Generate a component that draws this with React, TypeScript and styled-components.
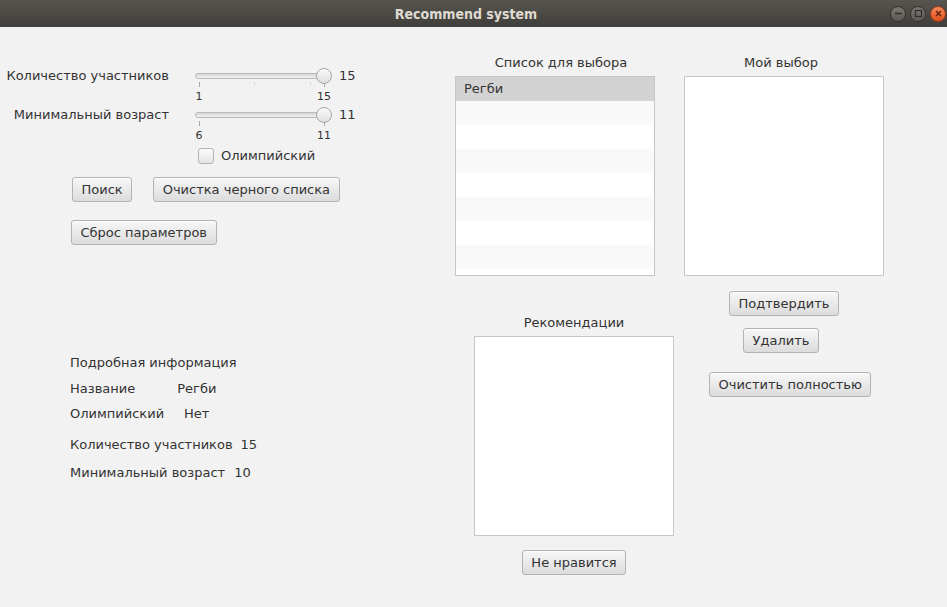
import React from "react";
import styled, { createGlobalStyle } from "styled-components";

const Global = createGlobalStyle`
  html, body { margin: 0; padding: 0; background: #f2f2f2; }
  body { font-family: "DejaVu Sans", "Noto Sans", sans-serif; font-size: 13px; color: #333333; }
  * { box-sizing: border-box; }
`;

const Window = styled.div`
  width: 947px;
  height: 607px;
  display: flex;
  flex-direction: column;
  overflow: hidden;
`;

const TitleBar = styled.div`
  height: 27px;
  flex: none;
  display: flex;
  align-items: center;
  background: linear-gradient(#57554f, #3f3e3a);
`;

const TitleText = styled.div`
  flex: 1;
  text-align: center;
  padding-left: 42px;
  font-family: "DejaVu Sans Condensed", "DejaVu Sans", sans-serif;
  font-weight: bold;
  font-size: 14px;
  color: #dfdbd2;
`;

const Controls = styled.div`
  display: flex;
  gap: 4px;
  margin-right: 1px;
`;

const Ctl = styled.div<{ $close?: boolean }>`
  width: 16px;
  height: 16px;
  border-radius: 50%;
  display: flex;
  align-items: center;
  justify-content: center;
  border: 1px solid ${(p) => (p.$close ? "#9e3a17" : "#34332f")};
  background: ${(p) =>
    p.$close
      ? "linear-gradient(#f58a5c, #e0501c)"
      : "linear-gradient(#7a7872, #5c5a55)"};
`;

const Content = styled.div`
  flex: 1;
  display: flex;
  background: #f2f2f2;
`;

const LeftColumn = styled.div`
  width: 455px;
  flex: none;
  display: flex;
  flex-direction: column;
  padding-top: 41px;
`;

const SliderRow = styled.div`
  display: flex;
  align-items: flex-start;
  height: 39px;
`;

const RowLabel = styled.div`
  width: 169px;
  text-align: right;
  line-height: 16px;
  white-space: nowrap;
`;

const SliderBox = styled.div`
  position: relative;
  width: 136px;
  margin-left: 26px;
  display: flex;
  flex-direction: column;
`;

const Track = styled.div`
  margin-top: 5px;
  height: 6px;
  border-radius: 3px;
  border: 1px solid #b9b9b9;
  background: linear-gradient(#d6d6d6, #f0f0f0);
`;

const Thumb = styled.div`
  position: absolute;
  top: 0;
  width: 16px;
  height: 16px;
  border-radius: 50%;
  border: 1px solid #a6a6a6;
  background: linear-gradient(#fbfbfb, #dedede);
`;

const Ticks = styled.svg`
  display: block;
  margin-top: 3px;
`;

const TickLabels = styled.div`
  display: flex;
  justify-content: space-between;
  margin: 2px -3px 0 -6px;
  font-size: 11px;
  line-height: 13px;
  color: #333;
`;

const TickLabel = styled.span`
  width: 20px;
  text-align: center;
`;

const SliderValue = styled.div`
  margin-left: 8px;
  line-height: 16px;
  font-size: 13px;
`;

const CheckRow = styled.label`
  display: flex;
  align-items: center;
  gap: 7px;
  margin: 2px 0 0 198px;
  line-height: 16px;
`;

const CheckBox = styled.span`
  width: 16px;
  height: 16px;
  border-radius: 3px;
  border: 1px solid #b4b4b4;
  background: linear-gradient(#fafafa, #e4e4e4);
`;

const ButtonRow = styled.div<{ $top: number; $left: number }>`
  display: flex;
  gap: 21px;
  margin-top: ${(p) => p.$top}px;
  margin-left: ${(p) => p.$left}px;
`;

const Button = styled.button<{ $top?: number; $left?: number }>`
  height: 25px;
  padding: 0 8.5px;
  font-family: "DejaVu Sans", sans-serif;
  font-size: 13px;
  color: #333;
  border: 1px solid #b3b3b3;
  border-radius: 3px;
  background: linear-gradient(#f7f7f7, #dcdcdc);
  box-shadow: inset 0 1px 0 rgba(255, 255, 255, 0.7);
  white-space: nowrap;
  align-self: flex-start;
  margin-top: ${(p) => p.$top ?? 0}px;
  margin-left: ${(p) => p.$left ?? 0}px;
`;

const Details = styled.div`
  margin: 110px 0 0 70px;
  display: flex;
  flex-direction: column;
`;

const DetailRow = styled.div<{ $top: number; $gap: number }>`
  display: flex;
  gap: ${(p) => p.$gap}px;
  line-height: 16px;
  margin-top: ${(p) => p.$top}px;
  white-space: nowrap;
`;

const MiddleColumn = styled.div`
  width: 229px;
  flex: none;
  display: flex;
  flex-direction: column;
  padding-top: 28px;
`;

const RightColumn = styled.div`
  width: 200px;
  flex: none;
  display: flex;
  flex-direction: column;
  padding-top: 28px;
`;

const Section = styled.div<{ $left?: number; $top?: number }>`
  width: 200px;
  display: flex;
  flex-direction: column;
  margin-left: ${(p) => p.$left ?? 0}px;
  margin-top: ${(p) => p.$top ?? 0}px;
`;

const SectionTitle = styled.div<{ $shift?: number }>`
  line-height: 16px;
  text-align: center;
  padding-left: ${(p) => Math.max(0, (p.$shift ?? 0) * 2)}px;
  padding-right: ${(p) => Math.max(0, -(p.$shift ?? 0) * 2)}px;
  margin-bottom: 5px;
  white-space: nowrap;
`;

const ListBox = styled.div`
  width: 200px;
  height: 200px;
  border: 1px solid #c6c6c6;
  background: #ffffff;
  overflow: hidden;
`;

const ListRow = styled.div<{ $selected?: boolean; $odd?: boolean }>`
  height: 24px;
  line-height: 24px;
  padding-left: 8px;
  background: ${(p) => (p.$selected ? "#d3d3d3" : p.$odd ? "#f9f9f9" : "#ffffff")};
`;

const CenterButton = styled(Button)`
  align-self: center;
`;

type SliderProps = { min: number; max: number; value: number; minor?: number[] };

const Slider = ({ min, max, value, minor = [] }: SliderProps) => {
  const frac = (value - min) / (max - min);
  return (
    <SliderBox>
      <Track />
      <Thumb style={{ left: 4 + frac * 125 - 8 }} />
      <Ticks width="136" height="6" viewBox="0 0 136 6">
        <line x1="4.5" y1="0" x2="4.5" y2="5" stroke="#a8a8a8" strokeWidth="1" />
        <line x1="129.5" y1="0" x2="129.5" y2="5" stroke="#a8a8a8" strokeWidth="1" />
        {minor.map((m) => (
          <line key={m} x1={m + 0.5} y1="0.5" x2={m + 0.5} y2="2.5" stroke="#c4c4c4" strokeWidth="1" />
        ))}
      </Ticks>
      <TickLabels>
        <TickLabel>{min}</TickLabel>
        <TickLabel>{max}</TickLabel>
      </TickLabels>
    </SliderBox>
  );
};

export default function App() {
  const rows = Array.from({ length: 9 }, (_, i) => i);
  return (
    <>
      <Global />
      <Window>
        <TitleBar>
          <TitleText>Recommend system</TitleText>
          <Controls>
            <Ctl>
              <svg width="9" height="9" viewBox="0 0 9 9">
                <line x1="1" y1="4.5" x2="8" y2="4.5" stroke="#2e2d29" strokeWidth="1.5" />
              </svg>
            </Ctl>
            <Ctl>
              <svg width="9" height="9" viewBox="0 0 9 9">
                <rect x="1.5" y="1.5" width="6" height="6" fill="none" stroke="#2e2d29" strokeWidth="1.2" />
              </svg>
            </Ctl>
            <Ctl $close>
              <svg width="9" height="9" viewBox="0 0 9 9">
                <path d="M2 2 L7 7 M7 2 L2 7" stroke="#5a1d08" strokeWidth="1.3" />
              </svg>
            </Ctl>
          </Controls>
        </TitleBar>
        <Content>
          <LeftColumn>
            <SliderRow>
              <RowLabel>Количество участников</RowLabel>
              <Slider min={1} max={15} value={15} minor={[59, 115]} />
              <SliderValue>15</SliderValue>
            </SliderRow>
            <SliderRow>
              <RowLabel>Минимальный возраст</RowLabel>
              <Slider min={6} max={11} value={11} />
              <SliderValue>11</SliderValue>
            </SliderRow>
            <CheckRow>
              <CheckBox />
              <span>Олимпийский</span>
            </CheckRow>
            <ButtonRow $top={13} $left={72}>
              <Button>Поиск</Button>
              <Button>Очистка черного списка</Button>
            </ButtonRow>
            <ButtonRow $top={18} $left={71}>
              <Button>Сброс параметров</Button>
            </ButtonRow>
            <Details>
              <DetailRow $top={0} $gap={0}>Подробная информация</DetailRow>
              <DetailRow $top={10} $gap={42}>
                <span>Название</span>
                <span>Регби</span>
              </DetailRow>
              <DetailRow $top={9} $gap={20}>
                <span>Олимпийский</span>
                <span>Нет</span>
              </DetailRow>
              <DetailRow $top={15} $gap={8}>
                <span>Количество участников</span>
                <span>15</span>
              </DetailRow>
              <DetailRow $top={12} $gap={9}>
                <span>Минимальный возраст</span>
                <span>10</span>
              </DetailRow>
            </Details>
          </LeftColumn>
          <MiddleColumn>
            <Section>
              <SectionTitle $shift={6}>Список для выбора</SectionTitle>
              <ListBox>
                {rows.map((i) => (
                  <ListRow key={i} $selected={i === 0} $odd={i % 2 === 1}>
                    {i === 0 ? "Регби" : ""}
                  </ListRow>
                ))}
              </ListBox>
            </Section>
            <Section $left={19} $top={39}>
              <SectionTitle>Рекомендации</SectionTitle>
              <ListBox />
              <CenterButton $top={14}>Не нравится</CenterButton>
            </Section>
          </MiddleColumn>
          <RightColumn>
            <SectionTitle $shift={-3}>Мой выбор</SectionTitle>
            <ListBox />
            <Button $top={15} $left={45}>Подтвердить</Button>
            <Button $top={12} $left={59}>Удалить</Button>
            <Button $top={19} $left={25}>Очистить полностью</Button>
          </RightColumn>
        </Content>
      </Window>
    </>
  );
}
